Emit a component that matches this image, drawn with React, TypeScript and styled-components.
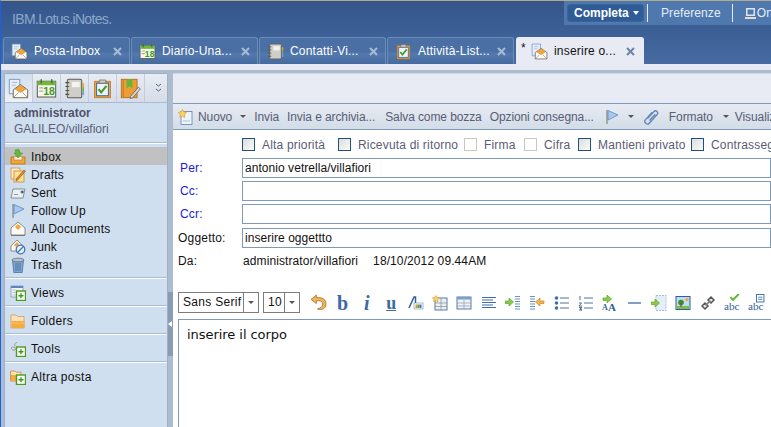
import React from "react";
import styled, { createGlobalStyle } from "styled-components";

const GlobalStyle = createGlobalStyle`
  html, body {
    margin: 0;
    padding: 0;
    width: 771px;
    height: 427px;
    overflow: hidden;
    background: #fff;
  }
  body {
    font-family: "Liberation Sans", Arial, sans-serif;
    font-size: 12px;
  }
`;

const Page = styled.div`
  width: 771px;
  height: 427px;
  overflow: hidden;
  display: flex;
  flex-direction: column;
  border-left: 1px solid #1a60e2;
  border-top: 1px solid #b3a98f;
  box-sizing: border-box;
`;

/* ---------- header ---------- */

const Header = styled.div`
  flex: 0 0 63px;
  display: flex;
  flex-direction: column;
  background: linear-gradient(#33558a, #466ba2);
`;

const TopRow = styled.div`
  flex: 0 0 36px;
  display: flex;
  justify-content: space-between;
`;

const Brand = styled.div`
  padding: 10px 0 0 11px;
  font-size: 14px;
  letter-spacing: -0.65px;
  color: #8ea8ca;
`;

const ViewSwitch = styled.div`
  flex: 0 0 207px;
  height: 24px;
  box-sizing: border-box;
  padding: 3px 0 0 3px;
  display: flex;
  background: #4f78ae;
  overflow: hidden;
  white-space: nowrap;
`;

const ViewButton = styled.div`
  flex: 0 0 77px;
  height: 18px;
  box-sizing: border-box;
  display: flex;
  align-items: center;
  gap: 4px;
  padding-left: 6px;
  border: 1px solid #3d6496;
  border-radius: 3px;
  background: #2f5b96;
  color: #fff;
  font-weight: bold;
  font-size: 12px;
`;

const WhiteCaret = styled.span`
  border-left: 3.5px solid transparent;
  border-right: 3.5px solid transparent;
  border-top: 4px solid #fff;
`;

const TopLink = styled.div<{ $ml: number; $pl: number }>`
  flex: none;
  height: 18px;
  display: flex;
  align-items: center;
  color: #e6edf6;
  font-size: 12px;
  letter-spacing: 0.1px;
  border-left: 1px solid #e6edf6;
  margin-left: ${(p) => p.$ml}px;
  padding-left: ${(p) => p.$pl}px;
`;

const TabRow = styled.div`
  flex: 0 0 27px;
  display: flex;
  gap: 1px;
  padding-left: 2px;
`;

const Tab = styled.div<{ $active?: boolean }>`
  width: ${(p) => (p.$active ? 128 : 127)}px;
  margin-left: ${(p) => (p.$active ? 1 : 0)}px;
  box-sizing: border-box;
  display: flex;
  align-items: center;
  padding-left: 7px;
  border: 1px solid ${(p) => (p.$active ? "#e8ebf3" : "#6c8cb8")};
  border-bottom: none;
  border-radius: 3px 3px 0 0;
  background: ${(p) =>
    p.$active
      ? "#e8ebf3"
      : "linear-gradient(#4a6fa5 0, #4a6fa5 50%, #5379ad 62%, #44699f 100%)"};
  color: ${(p) => (p.$active ? "#111" : "#fff")};
  font-size: 12px;
  letter-spacing: 0.2px;
  white-space: nowrap;
`;

const TabStar = styled.span`
  width: 6px;
  margin: -6px 4px 0 -3px;
  font-size: 12px;
`;

const TabLabel = styled.span`
  margin-left: 6px;
  flex: 1;
`;

const TabClose = styled.span<{ $active?: boolean }>`
  flex: 0 0 9px;
  margin-right: ${(p) => (p.$active ? 8 : 7)}px;
  display: flex;
  color: ${(p) => (p.$active ? "#6d83a6" : "#a9bcd6")};
`;

/* ---------- body ---------- */

const GapStrip = styled.div`
  flex: 0 0 6px;
  background: #e7eaf3;
`;

const GapLine = styled.div`
  flex: 0 0 3px;
  background: #adbccf;
`;

const Body = styled.div`
  flex: 1;
  min-height: 0;
  display: flex;
  background: #adbccf;
  padding-left: 3px;
`;

const Sidebar = styled.aside`
  flex: 0 0 164px;
  box-sizing: border-box;
  display: flex;
  flex-direction: column;
  background: #d0dfef;
  border: 1px solid #9db0c8;
  border-bottom: none;
  border-radius: 3px 3px 0 0;
`;

const AppIcons = styled.div`
  flex: 0 0 29px;
  box-sizing: border-box;
  display: flex;
  background: linear-gradient(#e8ecf4, #d5dde9);
  border-bottom: 1px solid #a9bad0;
`;

const AppIcon = styled.div<{ $on?: boolean }>`
  flex: 0 0 28px;
  box-sizing: border-box;
  display: flex;
  align-items: center;
  justify-content: center;
  border-right: 1px solid #c3cddc;
  background: ${(p) => (p.$on ? "linear-gradient(#d4dfee, #eef1f7)" : "none")};
`;

const MoreChevron = styled.div`
  flex: 1;
  display: flex;
  align-items: center;
  justify-content: flex-end;
  padding-right: 5px;
`;

const Owner = styled.div`
  flex: 0 0 40px;
  box-sizing: border-box;
  padding: 2px 0 0 9px;
  color: #5b5e78;
  font-size: 12px;
  line-height: 16px;
  border-bottom: 1px solid #a9bdd6;
  box-shadow: 0 1px 0 #fff;
`;

const OwnerName = styled.div`
  font-weight: bold;
  color: #50526a;
`;

const FolderList = styled.div`
  flex: 0 0 135px;
  box-sizing: border-box;
  padding-top: 4px;
  border-bottom: 1px solid #a9bdd6;
`;

const FolderRow = styled.div<{ $selected?: boolean }>`
  height: 18px;
  box-sizing: border-box;
  display: flex;
  align-items: center;
  gap: 5px;
  padding: 1px 0 0 5px;
  color: #111;
  font-size: 12px;
  letter-spacing: 0.15px;
  background: ${(p) => (p.$selected ? "#c1c1c1" : "transparent")};
`;

const Section = styled.div`
  flex: 0 0 28px;
  box-sizing: border-box;
  display: flex;
  align-items: center;
  gap: 5px;
  padding: 1px 0 0 5px;
  color: #111;
  font-size: 12px;
  letter-spacing: 0.3px;
  border-top: 1px solid #fff;
  border-bottom: 1px solid #a9bdd6;
`;

const LastSection = styled(Section)`
  border-bottom: none;
`;

const Splitter = styled.div`
  flex: 0 0 5px;
  padding-top: 219px;
`;

const SplitterHandle = styled.div`
  height: 64px;
  background: #899cb4;
  display: flex;
  align-items: center;
`;

const SplitterArrow = styled.span`
  border-top: 3px solid transparent;
  border-bottom: 3px solid transparent;
  border-right: 4px solid #fff;
`;

const Main = styled.main`
  flex: 1;
  min-width: 0;
  display: flex;
  flex-direction: column;
  background: #fff;
  overflow: hidden;
`;

const MainTop = styled.div`
  flex: 0 0 29px;
  background: #e8ebf4;
  border-top: 1px solid #cdd6e3;
  border-bottom: 1px solid #7f99b8;
`;

const ActionBar = styled.div`
  flex: 0 0 25px;
  display: flex;
  align-items: center;
  padding-left: 5px;
  background: linear-gradient(#e8ebf3, #d2dde7);
  border-bottom: 1px solid #7f99b8;
  color: #5a5c76;
  font-size: 12px;
  letter-spacing: -0.1px;
  white-space: nowrap;
`;

const ActionText = styled.span<{ $ml?: number }>`
  flex: none;
  display: flex;
  margin-left: ${(p) => p.$ml ?? 9}px;
`;

const Caret = styled.span<{ $ml?: number }>`
  flex: none;
  display: inline-block;
  margin-left: ${(p) => p.$ml ?? 8}px;
  border-left: 3px solid transparent;
  border-right: 3px solid transparent;
  border-top: 3px solid #5a5252;
`;

const OptionRow = styled.div`
  flex: 0 0 28px;
  display: flex;
  align-items: center;
  padding: 1px 0 0 69px;
  box-sizing: border-box;
  color: #5a5c76;
  font-size: 12px;
  letter-spacing: 0.18px;
  white-space: nowrap;
`;

const Option = styled.label<{ $w: number }>`
  flex: 0 0 ${(p) => p.$w}px;
  display: flex;
  align-items: center;
  gap: 7px;
`;

const Check = styled.span<{ $off?: boolean }>`
  flex: 0 0 13px;
  height: 13px;
  box-sizing: border-box;
  border: 1px solid ${(p) => (p.$off ? "#c9c9b8" : "#1d5180")};
  background: ${(p) =>
    p.$off ? "#fff" : "linear-gradient(135deg, #dcdcd8, #fbfbfb)"};
`;

const FieldGrid = styled.div`
  display: flex;
  flex-direction: column;
  gap: 3px;
`;

const FieldRow = styled.div<{ $mt?: number }>`
  display: flex;
  align-items: center;
  height: 20px;
  margin-top: ${(p) => p.$mt ?? 0}px;
`;

const FieldLabel = styled.div<{ $link?: boolean }>`
  flex: 0 0 69px;
  box-sizing: border-box;
  padding-left: ${(p) => (p.$link ? 7 : 5)}px;
  color: ${(p) => (p.$link ? "#1a1ae0" : "#111")};
  font-size: 12px;
  letter-spacing: 0.2px;
`;

const FieldInput = styled.div`
  flex: 1;
  height: 20px;
  box-sizing: border-box;
  border: 1px solid #7f9ab8;
  padding-left: 2px;
  line-height: 18px;
  color: #111;
  font-size: 12px;
  letter-spacing: 0.05px;
`;

const FromRow = styled.div`
  margin-top: 5px;
  flex: 0 0 16px;
  display: flex;
  align-items: center;
  color: #111;
  font-size: 12px;
`;

const FromValue = styled.span`
  margin-left: 1px;
  letter-spacing: 0.1px;
`;

const FromDate = styled.span`
  margin-left: 15px;
  letter-spacing: 0.1px;
`;

const EditorBar = styled.div`
  margin: 22px 0 0 5px;
  flex: 0 0 23px;
  display: flex;
  align-items: center;
`;

const Combo = styled.div<{ $w: number }>`
  flex: 0 0 ${(p) => p.$w}px;
  height: 21px;
  box-sizing: border-box;
  display: flex;
  margin-right: 4px;
  border: 1px solid #7d7d7d;
  color: #111;
  font-size: 12px;
  letter-spacing: 0.3px;
  line-height: 19px;
  white-space: nowrap;
`;

const ComboText = styled.span`
  flex: 1;
  padding-left: 4px;
`;

const ComboArrow = styled.span`
  flex: 0 0 14px;
  display: flex;
  align-items: center;
  justify-content: center;
  border-left: 1px solid #7d7d7d;
`;

const EditorIcons = styled.div`
  display: flex;
  margin-left: 2px;
`;

const EditorIcon = styled.span`
  flex: 0 0 24.35px;
  height: 20px;
  display: flex;
  align-items: center;
  justify-content: center;
`;

const EditorArea = styled.div`
  flex: 1;
  margin: 5px 0 0 5px;
  padding: 7px 0 0 8px;
  border: 1px solid #7f9ab8;
  border-right: none;
  border-bottom: none;
  color: #111;
  font-family: "DejaVu Sans", Verdana, sans-serif;
  font-size: 13px;
  letter-spacing: -0.05px;
`;

/* ---------- icons ---------- */

type IconProps = { size?: number };

const Svg = ({ size = 16, children }: IconProps & { children: React.ReactNode }) => (
  <svg width={size} height={size} viewBox="0 0 16 16" style={{ flex: "none" }}>
    {children}
  </svg>
);

const MailIcon = ({ size }: IconProps) => (
  <Svg size={size}>
    <path d="M1 1h8v11H1z" fill="#e6eef8" stroke="#6f94c4" strokeWidth=".7" />
    <path d="M3 3.5h4M3 5.5h3" stroke="#a6bfdc" strokeWidth=".8" />
    <path d="M4 9l5.5-4L15 9v6H4z" fill="#fbfbf6" stroke="#6b5f50" strokeWidth=".7" />
    <path d="M5.500 8.500l4-3 4 3-4 2.500z" fill="#f2a63a" stroke="#c97c14" strokeWidth=".4" />
    <path d="M4 15l4-4M15 15l-4-4" stroke="#8e8678" strokeWidth=".6" />
  </Svg>
);

const CalendarIcon = ({ size }: IconProps) => (
  <Svg size={size}>
    <rect x="1" y="2.500" width="14" height="12" fill="#f6f6ee" stroke="#5f5f52" strokeWidth=".8" />
    <rect x="1" y="2.500" width="14" height="3" fill="#6fb83a" />
    <path d="M4 1v3M12 1v3" stroke="#55604a" strokeWidth="1.100" />
    <path d="M2.500 7.500h3M2.500 10h3" stroke="#aaa" strokeWidth="1" />
    <text x="5.500" y="13.200" fontFamily="Liberation Sans" fontSize="8" fontWeight="bold" fill="#3f9a1e">18</text>
  </Svg>
);

const ContactsIcon = ({ size }: IconProps) => (
  <Svg size={size}>
    <rect x="2.500" y="1" width="11" height="14" rx="1" fill="#cfcfc8" stroke="#5e5e58" strokeWidth=".8" />
    <rect x="6" y="3" width="6" height="4" fill="#f2f2ee" />
    <path d="M1 3.500h3M1 6.500h3M1 9.500h3M1 12.500h3" stroke="#55554e" strokeWidth=".9" />
    <path d="M14 4h1.300v3H14z" fill="#f0a030" />
    <path d="M14 7h1.300v3H14z" fill="#6fb83a" />
    <path d="M14 10h1.300v3H14z" fill="#6f9fd8" />
  </Svg>
);

const TaskIcon = ({ size }: IconProps) => (
  <Svg size={size}>
    <rect x="2" y="2.500" width="12" height="12.500" fill="#f3a33a" stroke="#b8741c" strokeWidth=".6" />
    <rect x="3.500" y="4" width="9" height="9.500" fill="#eef4fb" stroke="#3f6da6" strokeWidth=".8" />
    <path d="M5.500 1.500h5v2.500h-5z" fill="#c8c8c0" stroke="#66665e" strokeWidth=".5" />
    <path d="M5 8.500l2 2.500 4-5" fill="none" stroke="#3f9a1e" strokeWidth="1.600" />
  </Svg>
);

const NotebookIcon = ({ size }: IconProps) => (
  <Svg size={size}>
    <rect x="1" y="1" width="12" height="14" fill="#ee9c34" stroke="#b3701d" strokeWidth=".7" />
    <path d="M2.500 1v14" stroke="#c57d22" strokeWidth=".8" />
    <path d="M5 1h4.500v7L7.200 6.300 5 8z" fill="#67b53a" />
    <path d="M8 14l6-7 1.500 1.300-6 7L8 15.500z" fill="#d8d8d2" stroke="#5e5e58" strokeWidth=".6" />
  </Svg>
);

const CloseIcon = () => (
  <svg width="9" height="9" viewBox="0 0 9 9">
    <path d="M1 1l7 7M8 1L1 8" stroke="currentColor" strokeWidth="2" />
  </svg>
);

const ChevronsIcon = () => (
  <svg width="7" height="10" viewBox="0 0 7 10">
    <path d="M1 1l2.500 2L6 1M1 6l2.500 2L6 6" fill="none" stroke="#5a6270" strokeWidth="1" />
  </svg>
);

const OnlineIcon = () => (
  <svg width="13" height="13" viewBox="0 0 13 13">
    <rect x="2.500" y="1.500" width="8" height="7" fill="#dfe6ef" stroke="#dfe6ef" />
    <rect x="3.500" y="2.500" width="6" height="5" fill="#4f78ae" />
    <path d="M1 11h11" stroke="#e6dcc4" strokeWidth="2" />
  </svg>
);

const InboxIcon = () => (
  <Svg>
    <path d="M1 8h14v7H1z" fill="#f2a63a" stroke="#a96a16" strokeWidth=".7" />
    <path d="M4 8v3h8V8" fill="#fbeacb" stroke="#a96a16" strokeWidth=".5" />
    <path d="M5 1l4-.5 1 3.500h2.500L8 9 4 4h2z" fill="#66b83a" stroke="#3d8a1c" strokeWidth=".5" />
  </Svg>
);

const DraftsIcon = () => (
  <Svg>
    <rect x="1" y="1" width="9" height="11" fill="#fbe9cf" stroke="#d98d3f" strokeWidth=".8" />
    <rect x="4" y="4" width="10" height="11" fill="#fbe58e" stroke="#c9863a" strokeWidth=".8" />
    <path d="M6 12l8-9 1.500 1.200-8 9L6 14z" fill="#e8803a" stroke="#7c4a22" strokeWidth=".5" />
  </Svg>
);

const SentIcon = () => (
  <Svg>
    <path d="M3 4h12l-2 9H1z" fill="#eef0f2" stroke="#77777a" strokeWidth=".8" />
    <path d="M11 6h2.500v2H11zM4 9.500h4" stroke="#7ea0c8" strokeWidth="1" />
  </Svg>
);

const FlagIcon = () => (
  <Svg>
    <path d="M3 1v14" stroke="#8a8a84" strokeWidth="1.300" />
    <path d="M4 1.500L14 6 4 11z" fill="#a9c8ee" stroke="#4f7fba" strokeWidth=".7" />
  </Svg>
);

const AllDocsIcon = () => (
  <Svg>
    <path d="M1 7l7-6 7 6v7H1z" fill="#fbfbf6" stroke="#6b5f50" strokeWidth=".7" />
    <path d="M5 6l3-3 3 3-3 3z" fill="#f2a63a" />
    <path d="M1 14.500h14" stroke="#77777a" strokeWidth="1" />
  </Svg>
);

const JunkIcon = () => (
  <Svg>
    <path d="M1 7l6-6 5 5v6H1z" fill="#fbfbf6" stroke="#6b5f50" strokeWidth=".7" />
    <path d="M4 6l3-3 2 2-3 3z" fill="#f2a63a" />
    <circle cx="10.500" cy="10.500" r="4.300" fill="#e6eef8" stroke="#3f74b5" strokeWidth="1.300" />
    <path d="M7.500 13.500l6-6" stroke="#3f74b5" strokeWidth="1.300" />
  </Svg>
);

const TrashIcon = () => (
  <Svg>
    <path d="M2.500 3h11l-1.300 12.500H3.800z" fill="#7fa6d2" stroke="#44668f" strokeWidth=".7" />
    <ellipse cx="8" cy="3" rx="6" ry="1.800" fill="#b6c3d2" stroke="#55606c" strokeWidth=".7" />
    <path d="M6 6v8M8 6v8M10 6v8" stroke="#3c5f8c" strokeWidth=".7" />
  </Svg>
);

const GreenPlus = () => (
  <>
    <rect x="6.500" y="6" width="9" height="9.500" fill="#fff" stroke="#4b9a1a" strokeWidth="1.400" />
    <path d="M8.500 10.700h5M11 8.200v5" stroke="#3f9a1e" strokeWidth="1.400" />
  </>
);

const ViewsIcon = () => (
  <Svg>
    <rect x="1" y="1" width="12" height="11" fill="#f0f4fa" stroke="#6f8fb8" strokeWidth=".7" />
    <rect x="1" y="1" width="12" height="2" fill="#5f86bc" />
    <path d="M2.500 5h3M2.500 7.500h3M2.500 10h3" stroke="#a8b8cc" strokeWidth=".9" />
    <GreenPlus />
  </Svg>
);

const FolderIcon = () => (
  <Svg>
    <path d="M1 2h5l1.500 1.500H14V15H1z" fill="#fbe5b8" stroke="#cf8e52" strokeWidth=".7" />
    <path d="M1.500 8H14.500V15H1.500z" fill="#f5ab3e" />
    <path d="M1.500 10h13" stroke="#fbd08a" strokeWidth=".7" />
  </Svg>
);

const ToolsIcon = () => (
  <Svg>
    <path d="M7 1.500c-2 0-2.500 2-2 3.500M1 7c1-1.200 2.500-1.300 4-.5v2.500C3.500 9.500 2 9 1 7z" fill="#e8e8e2" stroke="#8a8a84" strokeWidth=".8" />
    <GreenPlus />
  </Svg>
);

const MoreMailIcon = () => (
  <Svg>
    <path d="M.5 2h4.500l1.200 1.200H11V12H.5z" fill="#fbe5b8" stroke="#cf7e52" strokeWidth=".8" />
    <path d="M1 6h10v6H1z" fill="#f5ab3e" />
    <GreenPlus />
  </Svg>
);

const NewDocIcon = () => (
  <Svg>
    <rect x="3" y="2.500" width="11" height="13" fill="#eef4fb" stroke="#5c82b5" strokeWidth=".8" />
    <path d="M5 12h7" stroke="#a6bfdc" strokeWidth="1" />
    <path d="M4.500 .5l1.200 2.300 2.800.7-2 2.200.2 2.800L4.500 7 2 8.500l.3-2.800-2-2.200 2.800-.7z" fill="#fbd26a" stroke="#e39a2c" strokeWidth=".7" />
  </Svg>
);

const ClipIcon = () => (
  <svg width="18" height="18" viewBox="0 0 18 18" style={{ flex: "none" }}>
    <path
      d="M5.500 10.500l6.500-7c1.800-1.900 5 .9 3.200 3L7 15.500c-1.600 1.700-5.600-1.200-3.900-3.400L10 4.500M7.500 12.500l5.700-6.200"
      fill="none"
      stroke="#5f86b8"
      strokeWidth="1.300"
    />
  </svg>
);

const UndoIcon = () => (
  <Svg size={17}>
    <path d="M6 1L1 5l5 4V6.500c3-.5 6 0 6 3s-3 4-5 4.500c4 1.500 8 0 8-4.500 0-5-4-6.500-9-6z" fill="#f2b45e" stroke="#a5641a" strokeWidth=".7" />
  </Svg>
);

const GlyphB = styled.span`
  font-family: "Liberation Serif", serif;
  font-size: 20px;
  font-weight: bold;
  color: #3c6aa0;
  line-height: 18px;
`;

const GlyphI = styled(GlyphB)`
  font-style: italic;
`;

const GlyphU = styled(GlyphB)`
  font-size: 18px;
  text-decoration: underline;
`;

const ColorIcon = () => (
  <Svg>
    <path d="M1 13L6 2h1.500v11" fill="none" stroke="#2f6299" strokeWidth="1.500" />
    <rect x="6" y="8" width="9" height="6" fill="#fff" stroke="#6e8cb0" strokeWidth=".6" />
    <path d="M7.500 9.500h2v3.500h-2z" fill="#e9892c" />
    <path d="M9.500 9.500h2v3.500h-2z" fill="#5cab30" />
    <path d="M11.500 9.500h2v3.500h-2z" fill="#3c74bc" />
  </Svg>
);

const TableNewIcon = () => (
  <Svg>
    <rect x="3" y="3" width="12" height="12" fill="#eee" stroke="#46709f" strokeWidth=".9" />
    <path d="M9 3v12M3 8h12M3 11.500h12" stroke="#7f8f9f" strokeWidth=".7" />
    <path d="M4 .5l1 2 2.500.5-2 1.700.3 2.300L4 5.500 1.500 6.500l.5-2.300L.3 3l2.500-.5z" fill="#fbd26a" stroke="#e39a2c" strokeWidth=".6" />
  </Svg>
);

const TableIcon = () => (
  <Svg>
    <rect x="1" y="2" width="14" height="12" fill="#eef2f6" stroke="#46709f" strokeWidth=".9" />
    <rect x="1" y="2" width="14" height="2.500" fill="#7aa0cc" />
    <path d="M8 5v9M1 8h14M1 11h14" stroke="#8f9fb0" strokeWidth=".7" />
  </Svg>
);

const AlignIcon = () => (
  <Svg>
    <path d="M1 2.500h14M1 5h11M1 7.500h14M1 10h11M1 12.500h14" stroke="#3c6ea8" strokeWidth="1.200" />
  </Svg>
);

const GreenArrow = ({ x = 0, y = 0 }: { x?: number; y?: number }) => (
  <path transform={`translate(${x} ${y})`} d="M0 3h4V0l4.500 4L4 8V5.500H0z" fill="#8ccc4a" stroke="#4f9a1e" strokeWidth=".6" />
);

const IndentIcon = () => (
  <Svg>
    <GreenArrow x={0} y={3} />
    <path d="M10 1.500h5M10 4h5M10 6.500h5M10 9h5M10 11.500h5M10 14h5" stroke="#6a92bf" strokeWidth="1.100" />
  </Svg>
);

const OutdentIcon = () => (
  <Svg>
    <path d="M1 1.500h5M1 4h5M1 6.500h5M1 9h5M1 11.500h5M1 14h5" stroke="#6a92bf" strokeWidth="1.100" />
    <path d="M15 6h-4V3L6.500 7 11 11V8.500h4z" fill="#f7b34e" stroke="#bb7a1c" strokeWidth=".6" />
  </Svg>
);

const BulletIcon = () => (
  <Svg>
    <circle cx="2.500" cy="3" r="1.800" fill="#3c6ea8" />
    <circle cx="2.500" cy="8" r="1.800" fill="#3c6ea8" />
    <circle cx="2.500" cy="13" r="1.800" fill="#3c6ea8" />
    <path d="M6 3h9M6 8h9M6 13h9" stroke="#4a72a8" strokeWidth="1.200" />
  </Svg>
);

const NumberIcon = () => (
  <Svg>
    <path d="M2 1v4M1 8h2.500L1 11h3M1 12.500h3L2 14l2 1H1" fill="none" stroke="#3c5c88" strokeWidth=".9" />
    <path d="M6 3h9M6 8h9M6 13h9" stroke="#4a72a8" strokeWidth="1.200" />
  </Svg>
);

const FontSizeIcon = () => (
  <Svg>
    <GreenArrow x={1} y={0} />
    <text x="0" y="15" fontFamily="Liberation Serif" fontSize="8" fontWeight="bold" fill="#2f5f96">A</text>
    <text x="6" y="15.500" fontFamily="Liberation Serif" fontSize="11" fontWeight="bold" fill="#2f5f96">A</text>
  </Svg>
);

const RuleIcon = () => (
  <Svg>
    <path d="M1 8h13" stroke="#3c6ea8" strokeWidth="1.300" />
  </Svg>
);

const InsertIcon = () => (
  <Svg>
    <path d="M5 .5h10v15H5z" fill="#e6eff9" stroke="#8fb0d4" strokeWidth=".8" strokeDasharray="2 1" />
    <GreenArrow x={0} y={4} />
  </Svg>
);

const PictureIcon = () => (
  <Svg>
    <rect x="1" y="1.500" width="14" height="13" fill="#bcdcf4" stroke="#2f5f96" strokeWidth="1" />
    <path d="M1.500 11h13v3H1.500z" fill="#7cc04a" />
    <circle cx="12" cy="4.500" r="1.600" fill="#f2a63a" />
    <circle cx="6" cy="7.500" r="2.800" fill="#3f8a2a" />
    <path d="M6 8v4" stroke="#7c5a2c" strokeWidth="1.200" />
  </Svg>
);

const LinkIcon = () => (
  <Svg>
    <path d="M2 11l3-3 3 3-3 3zM8 5l3-3 3 3-3 3z" fill="#eee" stroke="#555" strokeWidth="1.500" />
    <path d="M5.500 10.500l5-5" stroke="#888" strokeWidth="2" />
  </Svg>
);

const AbcCheckIcon = () => (
  <Svg size={17}>
    <path d="M6 3l2.500 2.500L14 0" fill="none" stroke="#6cb83a" strokeWidth="2" />
    <text x="0" y="15" fontFamily="Liberation Serif" fontSize="10.500" fill="#2f5f96">abc</text>
  </Svg>
);

const AbcDocIcon = () => (
  <Svg size={17}>
    <rect x="8" y="0.500" width="7" height="7" fill="#fff" stroke="#3c6ea8" strokeWidth=".9" />
    <path d="M9.500 3h4M9.500 5h4" stroke="#3c6ea8" strokeWidth=".8" />
    <text x="0" y="15" fontFamily="Liberation Serif" fontSize="10.500" fill="#2f5f96">abc</text>
  </Svg>
);

const SmallArrow = styled.span`
  border-left: 3px solid transparent;
  border-right: 3px solid transparent;
  border-top: 3px solid #5a5252;
`;

/* ---------- data ---------- */

const tabs = [
  { label: "Posta-Inbox", icon: <MailIcon size={17} /> },
  { label: "Diario-Una...", icon: <CalendarIcon size={17} /> },
  { label: "Contatti-Vi...", icon: <ContactsIcon size={17} /> },
  { label: "Attività-List...", icon: <TaskIcon size={17} /> },
];

const folders = [
  { label: "Inbox", icon: <InboxIcon />, selected: true },
  { label: "Drafts", icon: <DraftsIcon /> },
  { label: "Sent", icon: <SentIcon /> },
  { label: "Follow Up", icon: <FlagIcon /> },
  { label: "All Documents", icon: <AllDocsIcon /> },
  { label: "Junk", icon: <JunkIcon /> },
  { label: "Trash", icon: <TrashIcon /> },
];

const options = [
  { label: "Alta priorità", w: 96 },
  { label: "Ricevuta di ritorno", w: 126 },
  { label: "Firma", w: 60, off: true },
  { label: "Cifra", w: 54, off: true },
  { label: "Mantieni privato", w: 113 },
  { label: "Contrassegna", w: 120 },
];

const fields = [
  { label: "Per:", value: "antonio vetrella/villafiori", link: true },
  { label: "Cc:", value: "", link: true },
  { label: "Ccr:", value: "", link: true },
  { label: "Oggetto:", value: "inserire oggettto", mt: 1 },
];

const editorIcons = [
  <UndoIcon />,
  <GlyphB>b</GlyphB>,
  <GlyphI>i</GlyphI>,
  <GlyphU>u</GlyphU>,
  <ColorIcon />,
  <TableNewIcon />,
  <TableIcon />,
  <AlignIcon />,
  <IndentIcon />,
  <OutdentIcon />,
  <BulletIcon />,
  <NumberIcon />,
  <FontSizeIcon />,
  <RuleIcon />,
  <InsertIcon />,
  <PictureIcon />,
  <LinkIcon />,
  <AbcCheckIcon />,
  <AbcDocIcon />,
];

export default function App() {
  return (
    <Page>
      <GlobalStyle />
      <Header>
        <TopRow>
          <Brand>IBM.Lotus.iNotes.</Brand>
          <ViewSwitch>
            <ViewButton>
              Completa <WhiteCaret />
            </ViewButton>
            <TopLink $ml={3} $pl={13}>Preferenze</TopLink>
            <TopLink $ml={11} $pl={11}>
              <OnlineIcon />
              Online
            </TopLink>
          </ViewSwitch>
        </TopRow>
        <TabRow>
          {tabs.map((t) => (
            <Tab key={t.label}>
              {t.icon}
              <TabLabel>{t.label}</TabLabel>
              <TabClose>
                <CloseIcon />
              </TabClose>
            </Tab>
          ))}
          <Tab $active>
            <TabStar>*</TabStar>
            <MailIcon size={17} />
            <TabLabel>inserire o...</TabLabel>
            <TabClose $active>
              <CloseIcon />
            </TabClose>
          </Tab>
        </TabRow>
      </Header>
      <GapStrip />
      <GapLine />
      <Body>
        <Sidebar>
          <AppIcons>
            <AppIcon $on>
              <MailIcon size={21} />
            </AppIcon>
            <AppIcon>
              <CalendarIcon size={21} />
            </AppIcon>
            <AppIcon>
              <ContactsIcon size={21} />
            </AppIcon>
            <AppIcon>
              <TaskIcon size={21} />
            </AppIcon>
            <AppIcon>
              <NotebookIcon size={21} />
            </AppIcon>
            <MoreChevron>
              <ChevronsIcon />
            </MoreChevron>
          </AppIcons>
          <Owner>
            <OwnerName>administrator</OwnerName>
            GALILEO/villafiori
          </Owner>
          <FolderList>
            {folders.map((f) => (
              <FolderRow key={f.label} $selected={f.selected}>
                {f.icon}
                {f.label}
              </FolderRow>
            ))}
          </FolderList>
          <Section>
            <ViewsIcon />
            Views
          </Section>
          <Section>
            <FolderIcon />
            Folders
          </Section>
          <Section>
            <ToolsIcon />
            Tools
          </Section>
          <LastSection>
            <MoreMailIcon />
            Altra posta
          </LastSection>
        </Sidebar>
        <Splitter>
          <SplitterHandle>
            <SplitterArrow />
          </SplitterHandle>
        </Splitter>
        <Main>
          <MainTop />
          <ActionBar>
            <NewDocIcon />
            <ActionText $ml={4}>Nuovo</ActionText>
            <Caret />
            <ActionText $ml={8}>Invia</ActionText>
            <ActionText $ml={8}>Invia e archivia...</ActionText>
            <ActionText $ml={10}>Salva come bozza</ActionText>
            <ActionText $ml={8}>Opzioni consegna...</ActionText>
            <ActionText $ml={10}>
              <FlagIcon />
            </ActionText>
            <Caret />
            <ActionText $ml={8}>
              <ClipIcon />
            </ActionText>
            <ActionText $ml={9}>Formato</ActionText>
            <Caret $ml={10} />
            <ActionText $ml={6}>Visualizza</ActionText>
          </ActionBar>
          <OptionRow>
            {options.map((o) => (
              <Option key={o.label} $w={o.w}>
                <Check $off={o.off} />
                {o.label}
              </Option>
            ))}
          </OptionRow>
          <FieldGrid>
            {fields.map((f) => (
              <FieldRow key={f.label} $mt={f.mt}>
                <FieldLabel $link={f.link}>{f.label}</FieldLabel>
                <FieldInput>{f.value}</FieldInput>
              </FieldRow>
            ))}
          </FieldGrid>
          <FromRow>
            <FieldLabel>Da:</FieldLabel>
            <FromValue>administrator/villafiori</FromValue>
            <FromDate>18/10/2012 09.44AM</FromDate>
          </FromRow>
          <EditorBar>
            <Combo $w={81}>
              <ComboText>Sans Serif</ComboText>
              <ComboArrow>
                <SmallArrow />
              </ComboArrow>
            </Combo>
            <Combo $w={37}>
              <ComboText>10</ComboText>
              <ComboArrow>
                <SmallArrow />
              </ComboArrow>
            </Combo>
            <EditorIcons>
              {editorIcons.map((icon, i) => (
                <EditorIcon key={i}>{icon}</EditorIcon>
              ))}
            </EditorIcons>
          </EditorBar>
          <EditorArea>inserire il corpo</EditorArea>
        </Main>
      </Body>
    </Page>
  );
}
